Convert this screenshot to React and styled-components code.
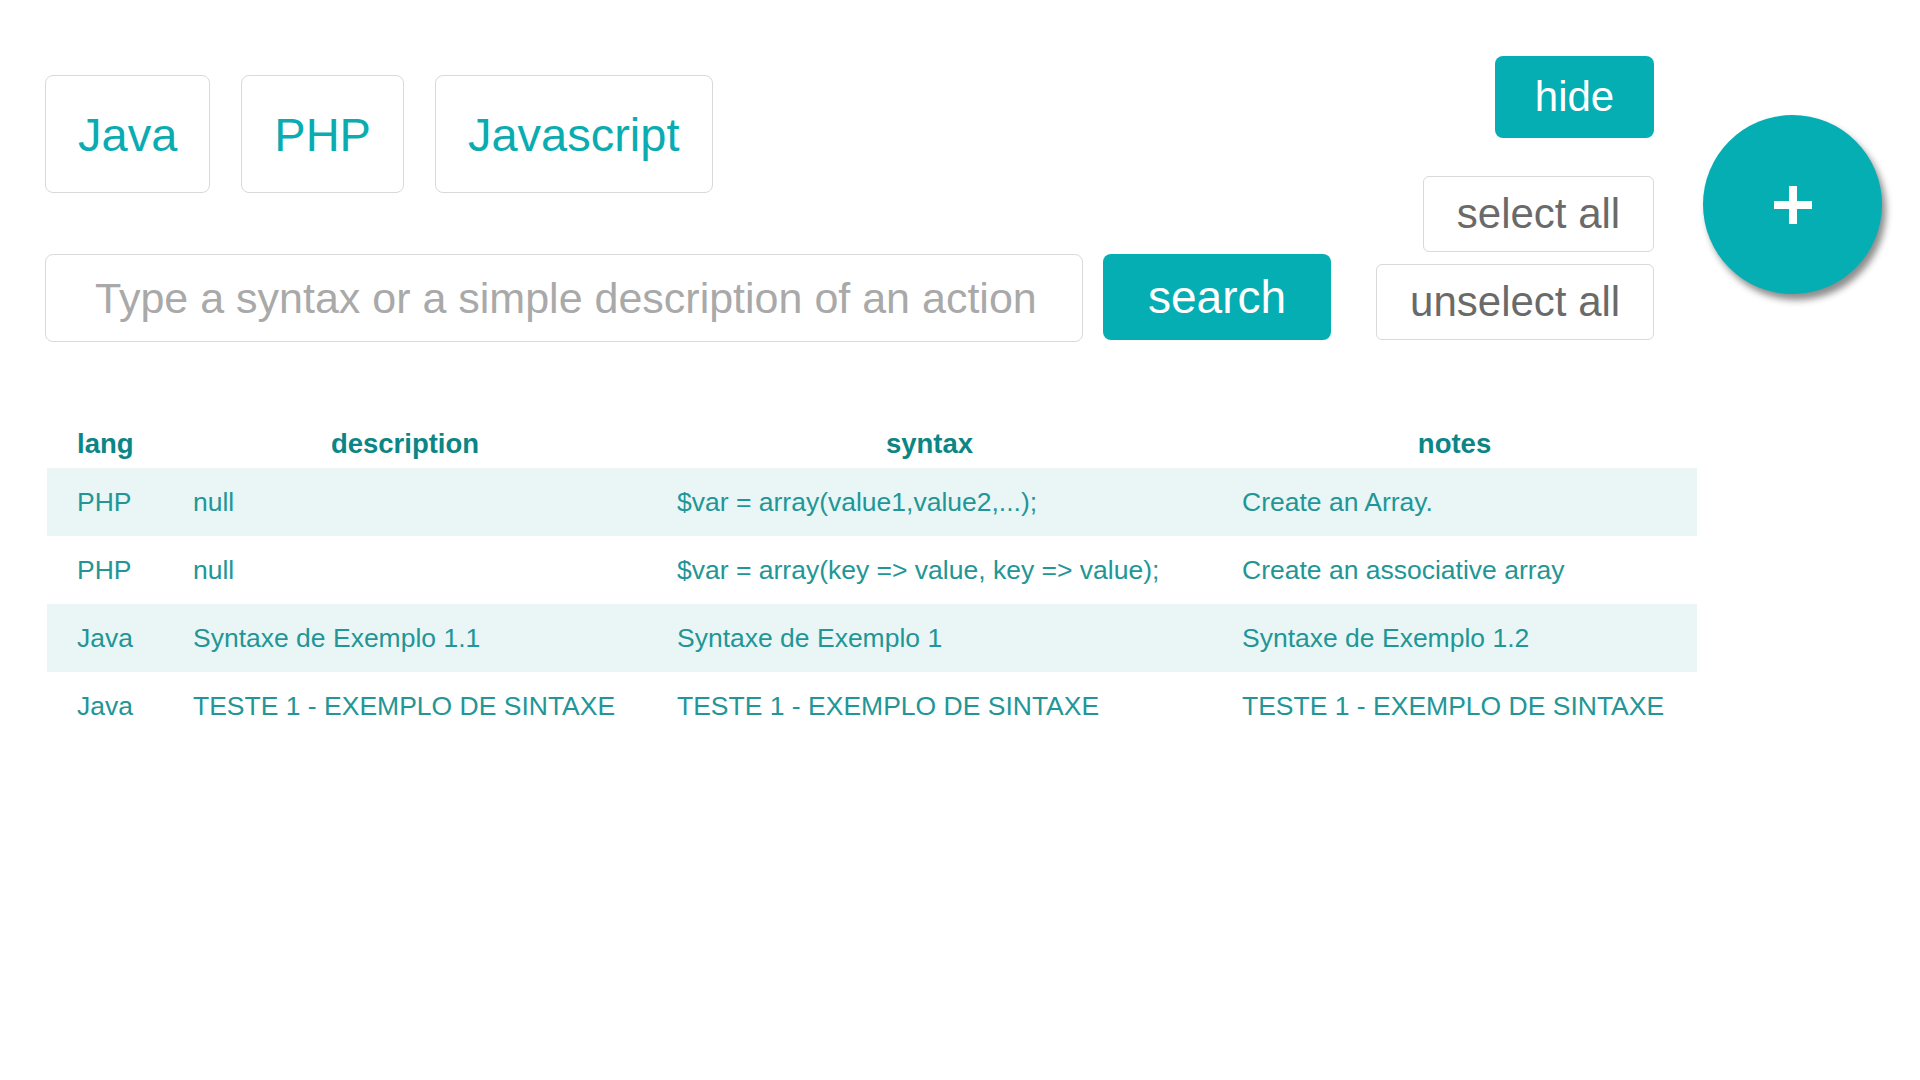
import React from "react";
import styled, { createGlobalStyle } from "styled-components";

const TEAL = "#05aeb3";

const GlobalStyle = createGlobalStyle`
  html, body {
    margin: 0;
    padding: 0;
    background: #ffffff;
    font-family: "Liberation Sans", Arial, sans-serif;
  }
  * { box-sizing: border-box; }
`;

const Page = styled.div`
  padding: 56px 0 0 45px;
  width: 1920px;
  min-height: 1080px;
`;

const TopBar = styled.div`
  display: flex;
  align-items: flex-start;
`;

const LeftPane = styled.div`
  margin-top: 19px;
  display: flex;
  flex-direction: column;
`;

const TabRow = styled.div`
  display: flex;
  gap: 31px;
`;

const LangTab = styled.button`
  height: 118px;
  padding: 0 32px;
  background: #fff;
  border: 1px solid #d9d9d9;
  border-radius: 8px;
  color: #0aacb1;
  font-family: "Liberation Sans", Arial, sans-serif;
  font-size: 47px;
  cursor: pointer;
`;

const SearchRow = styled.div`
  margin-top: 61px;
  display: flex;
  align-items: flex-start;
  gap: 20px;
`;

const SearchInput = styled.input`
  width: 1038px;
  height: 88px;
  padding: 0 0 0 49px;
  border: 1px solid #d9d9d9;
  border-radius: 8px;
  font-family: "Liberation Sans", Arial, sans-serif;
  font-size: 43px;
  color: #555;
  outline: none;
  &::placeholder {
    color: #a9a9a9;
  }
`;

const SolidButton = styled.button`
  height: ${(p) => p.$h}px;
  padding: 0 ${(p) => p.$px}px;
  background: ${TEAL};
  color: #fff;
  border: none;
  border-radius: 8px;
  font-family: "Liberation Sans", Arial, sans-serif;
  font-size: ${(p) => p.$fs}px;
  cursor: pointer;
`;

const RightPane = styled.div`
  margin-left: 45px;
  display: flex;
  flex-direction: column;
  align-items: flex-end;
`;

const OutlineButton = styled.button`
  margin-top: ${(p) => p.$mt}px;
  height: 76px;
  padding: 0 33px;
  background: #fff;
  color: #6a6a6a;
  border: 1px solid #d9d9d9;
  border-radius: 6px;
  font-family: "Liberation Sans", Arial, sans-serif;
  font-size: 42px;
  cursor: pointer;
`;

const Fab = styled.button`
  margin: 59px 0 0 49px;
  width: 179px;
  height: 179px;
  border-radius: 50%;
  border: none;
  background: ${TEAL};
  box-shadow: 4px 6px 7px rgba(0, 0, 0, 0.45);
  display: flex;
  align-items: center;
  justify-content: center;
  cursor: pointer;
  padding: 0;
`;

const Table = styled.table`
  margin: 86px 0 0 2px;
  width: 1650px;
  table-layout: fixed;
  border-collapse: collapse;
  border-spacing: 0;
  font-family: "Liberation Sans", Arial, sans-serif;
`;

const Col = styled.col`
  width: ${(p) => p.$w}px;
`;

const HeadCell = styled.th`
  padding: 0 30px 8px;
  line-height: 32px;
  font-size: 27.5px;
  font-weight: bold;
  color: #0b8585;
  text-align: center;
  white-space: nowrap;
`;

const Row = styled.tr`
  background: ${(p) => (p.$shaded ? "#eaf6f6" : "transparent")};
`;

const Cell = styled.td`
  height: 68px;
  padding: 0 0 0 30px;
  font-size: 26.5px;
  color: #229696;
  vertical-align: middle;
  white-space: nowrap;
`;

const columns = [
  { key: "lang", w: 116 },
  { key: "description", w: 484 },
  { key: "syntax", w: 565 },
  { key: "notes", w: 485 },
];

const rows = [
  ["PHP", "null", "$var = array(value1,value2,...);", "Create an Array."],
  ["PHP", "null", "$var = array(key => value, key => value);", "Create an associative array"],
  ["Java", "Syntaxe de Exemplo 1.1", "Syntaxe de Exemplo 1", "Syntaxe de Exemplo 1.2"],
  ["Java", "TESTE 1 - EXEMPLO DE SINTAXE", "TESTE 1 - EXEMPLO DE SINTAXE", "TESTE 1 - EXEMPLO DE SINTAXE"],
];

export default function App() {
  return (
    <>
      <GlobalStyle />
      <Page>
        <TopBar>
          <LeftPane>
            <TabRow>
              <LangTab>Java</LangTab>
              <LangTab>PHP</LangTab>
              <LangTab>Javascript</LangTab>
            </TabRow>
            <SearchRow>
              <SearchInput placeholder="Type a syntax or a simple description of an action" />
              <SolidButton $h={86} $px={45} $fs={46}>search</SolidButton>
            </SearchRow>
          </LeftPane>
          <RightPane>
            <SolidButton $h={82} $px={40} $fs={42}>hide</SolidButton>
            <OutlineButton $mt={38}>select all</OutlineButton>
            <OutlineButton $mt={12}>unselect all</OutlineButton>
          </RightPane>
          <Fab aria-label="add">
            <svg width="38" height="38" viewBox="0 0 38 38">
              <rect x="15" y="0" width="8" height="38" fill="#fff" />
              <rect x="0" y="15" width="38" height="8" fill="#fff" />
            </svg>
          </Fab>
        </TopBar>
        <Table>
          <colgroup>
            {columns.map((c) => (
              <Col key={c.key} $w={c.w} />
            ))}
          </colgroup>
          <thead>
            <tr>
              {columns.map((c) => (
                <HeadCell key={c.key}>{c.key}</HeadCell>
              ))}
            </tr>
          </thead>
          <tbody>
            {rows.map((r, i) => (
              <Row key={i} $shaded={i % 2 === 0}>
                {r.map((c, j) => (
                  <Cell key={j}>{c}</Cell>
                ))}
              </Row>
            ))}
          </tbody>
        </Table>
      </Page>
    </>
  );
}
